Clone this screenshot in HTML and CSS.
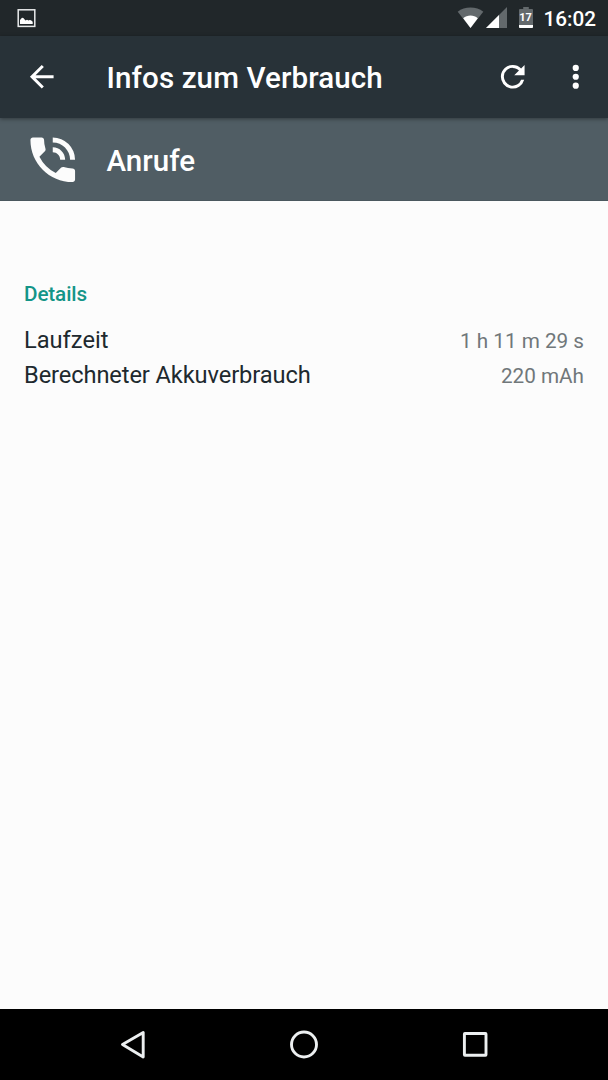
FILE: index.html
```html
<!DOCTYPE html>
<html lang="de">
<head>
<meta charset="utf-8">
<title>Infos zum Verbrauch</title>
<link rel="stylesheet" href="styles.css">
</head>
<body>
<div class="screen">
  <header class="status">
    <svg class="status-picture" width="20" height="20" viewBox="0 0 20 20"><rect x="2.200" y="1.800" width="16.600" height="16.600" fill="none" stroke="#e8eaeb" stroke-width="1.500"/><path d="M4 16v-4l2-2.300 1.300.2 2.200 2.600 1.500-.8 1.600.7 1-.4 1.400.2 1.700 1.600V16z" fill="#fff"/></svg>
    <svg class="status-wifi" width="27" height="22" viewBox="0 0 27 22"><path d="M13.500 21 .7 4.700C4.300 1.900 8.700.5 13.500.5s9.200 1.400 12.800 4.200z" fill="#63696c"/><path d="M13.500 21 6.200 11.200c2-1.800 4.600-2.800 7.300-2.800s5.300 1 7.300 2.800z" fill="#fff"/></svg>
    <svg class="status-signal" width="21" height="21" viewBox="0 0 21 21"><path d="M0 21 21 0v21z" fill="#63696c"/><path d="M0 21 13 8v13z" fill="#fff"/></svg>
    <span class="battery"><svg width="14" height="21" viewBox="0 0 14 21"><path d="M4.200 0h5.600v2H13q1 0 1 1v17q0 1-1 1H1q-1 0-1-1V3q0-1 1-1h3.200z" fill="#63696c"/><path d="M0 18h14v2q0 1-1 1H1q-1 0-1-1z" fill="#fff"/></svg><span class="battery-level">17</span></span>
    <span class="clock">16:02</span>
  </header>
  <nav class="toolbar">
    <svg class="icon" viewBox="0 0 24 24"><path d="M20 11H7.830l5.590-5.590L12 4l-8 8 8 8 1.410-1.410L7.830 13H20z"/></svg>
    <h1 class="title">Infos zum Verbrauch</h1>
    <svg class="icon icon-refresh" viewBox="0 0 24 24"><path d="M17.650 6.350A7.960 7.960 0 0 0 12 4a8 8 0 1 0 7.730 10h-2.080A6 6 0 1 1 12 6c1.660 0 3.140.69 4.220 1.780L13 11h7V4z"/></svg>
    <svg class="icon" viewBox="0 0 24 24"><circle cx="12" cy="6" r="2.100"/><circle cx="12" cy="12" r="2.100"/><circle cx="12" cy="18" r="2.100"/></svg>
  </nav>
  <section class="subject">
    <svg class="phone" viewBox="0 0 24 24"><path d="M20 15.500c-1.250 0-2.450-.2-3.570-.57-.35-.11-.74-.03-1.020.24l-2.200 2.200a15.050 15.050 0 0 1-6.590-6.580l2.200-2.210c.28-.27.36-.66.250-1.010A11.360 11.360 0 0 1 8.500 4c0-.55-.45-1-1-1H4c-.55 0-1 .45-1 1 0 9.390 7.610 17 17 17 .55 0 1-.45 1-1v-3.500c0-.55-.45-1-1-1zM19 12h2a9 9 0 0 0-9-9v2c3.870 0 7 3.130 7 7zm-4 0h2c0-2.760-2.240-5-5-5v2c1.660 0 3 1.340 3 3z"/></svg>
    <h2 class="subject-name">Anrufe</h2>
  </section>
  <main class="content">
    <h3 class="section-title">Details</h3>
    <dl class="details">
      <div class="row"><dt>Laufzeit</dt><dd>1 h 11 m 29 s</dd></div>
      <div class="row"><dt class="tight">Berechneter Akkuverbrauch</dt><dd>220 mAh</dd></div>
    </dl>
  </main>
  <footer class="navbar">
    <svg width="28" height="32" viewBox="0 0 28 32"><path d="M3.500 15.500 24.200 3.500v24.500z"/></svg>
    <svg width="32" height="32" viewBox="0 0 32 32"><circle cx="16" cy="15.500" r="12.500"/></svg>
    <svg width="28" height="32" viewBox="0 0 28 32"><rect x="3.400" y="4.500" width="21.600" height="21.800" rx=".5"/></svg>
  </footer>
</div>
</body>
</html>
```
FILE: styles.css
```css
* { box-sizing: border-box; margin: 0; padding: 0; }
body { font-family: Roboto, sans-serif; background: #fcfcfc; }
.screen { width: 608px; height: 1080px; display: flex; flex-direction: column; overflow: hidden; }
svg { display: block; flex: none; }

.status { height: 36px; flex: none; display: flex; align-items: center; background: #21272a; padding: 0 12px 0 16px; }
.status-picture { margin-right: auto; }
.status-wifi { margin-right: 2px; }
.status-signal { margin-right: 12px; }
.battery { display: grid; margin-right: 11px; }
.battery > * { grid-area: 1 / 1; }
.battery svg { margin-top: -1px; }
.status-signal { margin-top: -1px; }
.battery-level { color: #fff; font-size: 11px; line-height: 20px; font-weight: 700; text-align: center; }
.clock { color: #fff; font-size: 20.700px; font-weight: 500; line-height: 36px; padding-top: 2px; }

.toolbar { height: 82px; flex: none; display: flex; align-items: center; background: #283238; padding: 0 15px 0 24px; position: relative; box-shadow: 0 1px 4px rgba(0, 0, 0, .4); }
.icon { width: 35.500px; height: 35.500px; fill: #fff; }
.title { flex: 1; margin-left: 47px; padding-top: 2px; color: #fff; font-size: 29.560px; font-weight: 500; line-height: 40px; letter-spacing: .1px; }
.icon-refresh { margin-right: 27px; }

.subject { height: 83px; flex: none; display: flex; align-items: center; background: #505d64; border-bottom: 1px solid #4a575e; padding: 1px 0 0 23.200px; }
.phone { width: 59.500px; height: 59.500px; fill: #fcfcfc; }
.subject-name { margin-left: 23.800px; padding-top: 3px; color: #fff; font-size: 29.560px; font-weight: 500; line-height: 40px; }

.content { flex: 1; padding: 81px 24px 0; }
.section-title { color: #149588; font-size: 20.700px; font-weight: 500; line-height: 24px; letter-spacing: -.12px; }
.details { margin-top: 16.500px; }
.row { display: flex; justify-content: space-between; align-items: baseline; height: 35.500px; }
.row dt { color: #20292e; font-size: 23.650px; line-height: 35.500px; }
.row .tight { letter-spacing: -.1px; }
.row dd { color: #70777a; font-size: 20.700px; line-height: 35.500px; }

.navbar { height: 71px; flex: none; background: #000; display: flex; justify-content: space-between; align-items: center; padding: 0 119px; }
.navbar svg { fill: none; stroke: #eceff0; stroke-width: 2.900; stroke-linejoin: round; }
```
